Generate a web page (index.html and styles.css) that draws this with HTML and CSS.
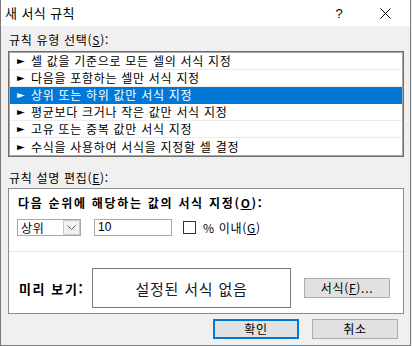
FILE: index.html
```html
<!DOCTYPE html>
<html lang="ko">
<head>
<meta charset="utf-8">
<link rel="stylesheet" href="styles.css">
</head>
<body>
<div class="window">
  <div class="titlebar">
    <div class="title">새 서식 규칙</div>
    <div class="tb-help">?</div>
    <div class="tb-close">
      <svg width="11" height="11" viewBox="0 0 11 11"><path d="M0.5 0.5 L10.5 10.5 M10.5 0.5 L0.5 10.5" stroke="#000" stroke-width="1" fill="none"/></svg>
    </div>
  </div>
  <div class="content">
    <div class="label lbl-type">규칙 유형 선택(<u>S</u>):</div>
    <div class="listbox">
      <div class="row"><span class="arrow">►</span>셀 값을 기준으로 모든 셀의 서식 지정</div>
      <div class="row"><span class="arrow">►</span>다음을 포함하는 셀만 서식 지정</div>
      <div class="row sel"><span class="arrow">►</span>상위 또는 하위 값만 서식 지정</div>
      <div class="row"><span class="arrow">►</span>평균보다 크거나 작은 값만 서식 지정</div>
      <div class="row"><span class="arrow">►</span>고유 또는 중복 값만 서식 지정</div>
      <div class="row last"><span class="arrow">►</span>수식을 사용하여 서식을 지정할 셀 결정</div>
    </div>
    <div class="label lbl-edit">규칙 설명 편집(<u>E</u>):</div>
    <div class="group">
      <div class="heading">다음 순위에 해당하는 값의 서식 지정(<u>O</u>):</div>
      <div class="controls">
        <div class="combo">
          <span class="combo-text">상위</span>
          <span class="combo-btn">
            <svg width="9" height="5" viewBox="0 0 9 5"><path d="M0.5 0.5 L4.5 4.5 L8.5 0.5" stroke="#606060" stroke-width="1" fill="none"/></svg>
          </span>
        </div>
        <div class="input">10</div>
        <div class="check"></div>
        <div class="check-label">% 이내(<u>G</u>)</div>
      </div>
      <div class="sep"></div>
      <div class="preview-row">
        <div class="preview-label">미리 보기:</div>
        <div class="preview">설정된 서식 없음</div>
        <div class="btn btn-format">서식(<u>F</u>)...</div>
      </div>
    </div>
    <div class="buttons">
      <div class="btn btn-ok">확인</div>
      <div class="btn">취소</div>
    </div>
  </div>
</div>
</body>
</html>
```

FILE: styles.css
```css
* { box-sizing: border-box; }
html, body { margin: 0; padding: 0; background: #f0f0f0; }
body {
  font-family: "Noto Sans CJK KR", "Noto Sans", sans-serif;
  font-size: 12px;
  letter-spacing: 0.7px;
  color: #000;
}
u { text-decoration: underline; text-underline-offset: 1px; }
.window {
  width: 411px;
  height: 346px;
  background: #f0f0f0;
  border-left: 1px solid #7a7a7a;
  border-right: 1px solid #7a7a7a;
  border-bottom: 1px solid #7a7a7a;
  display: flex;
  flex-direction: column;
}
.titlebar {
  height: 26px;
  background: #fff;
  display: flex;
  align-items: center;
  flex-shrink: 0;
}
.title {
  font-size: 13px;
  letter-spacing: 0.4px;
  padding-left: 4px;
  flex: 1;
  line-height: 26px;
}
.tb-help {
  width: 46px;
  text-align: center;
  font-family: "Liberation Sans", sans-serif;
  font-size: 13px;
  letter-spacing: 0;
}
.tb-close {
  width: 46px;
  height: 26px;
  display: flex;
  align-items: center;
  justify-content: center;
  margin-right: 2px;
}
.content {
  padding: 0 6px 0 7px;
  display: flex;
  flex-direction: column;
}
.label {
  height: 16px;
  line-height: 16px;
  padding-left: 1px;
}
.lbl-type { margin-top: 6px; }
.listbox {
  margin-top: 3px;
  height: 106px;
  border: 1px solid #6d6d6d;
  box-shadow: inset 0 0 0 1px #a8a8a8;
  background: #fff;
  padding: 1px;
}
.row {
  height: 17px;
  line-height: 16px;
  border-bottom: 1px solid #ececec;
  padding-left: 7px;
  white-space: nowrap;
  display: flex;
  align-items: center;
}
.row.last { border-bottom: none; }
.row.sel { background: #0078d7; color: #fff; border-bottom-color: #0078d7; }
.arrow {
  font-family: "DejaVu Sans", sans-serif;
  font-size: 10px;
  letter-spacing: 0;
  width: 14px;
  display: inline-block;
}
.lbl-edit { margin-top: 13px; }
.group {
  margin-top: 2px;
  height: 126px;
  border: 1px solid #8c8c8c;
  background: #fff;
  padding: 6px 0 0 0;
  display: flex;
  flex-direction: column;
}
.heading {
  font-weight: bold;
  height: 16px;
  line-height: 16px;
  padding-left: 9px;
  letter-spacing: 1.7px;
}
.controls {
  margin-top: 8px;
  height: 17px;
  display: flex;
  align-items: center;
  padding-left: 8px;
}
.combo {
  width: 64px;
  height: 17px;
  border: 1px solid #a8a8a8;
  display: flex;
  align-items: center;
}
.combo-text { flex: 1; padding-left: 3px; line-height: 15px; }
.combo-btn {
  width: 17px;
  height: 15px;
  border: 1px solid #c8c8c8;
  background: #f2f2f2;
  display: flex;
  align-items: center;
  justify-content: center;
}
.input {
  margin-left: 13px;
  width: 78px;
  height: 17px;
  border: 1px solid #a8a8a8;
  padding-left: 3px;
  line-height: 15px;
  font-family: "Liberation Sans", sans-serif;
  letter-spacing: 0;
}
.check {
  margin-left: 11px;
  width: 13px;
  height: 13px;
  border: 1px solid #333;
  background: #fff;
}
.check-label { margin-left: 7px; line-height: 16px; }
.sep {
  margin-top: 15px;
  height: 1px;
  background: #e3e3e3;
}
.preview-row {
  margin-top: 16px;
  display: flex;
  align-items: center;
}
.preview-label {
  width: 83px;
  padding-left: 10px;
  font-weight: bold;
  font-size: 13px;
  letter-spacing: 1.6px;
}
.preview {
  width: 199px;
  height: 40px;
  border: 1px solid #7a7a7a;
  display: flex;
  align-items: center;
  justify-content: center;
  font-size: 15px;
  letter-spacing: 0.8px;
  color: #1a1a2e;
}
.btn {
  width: 86px;
  height: 20px;
  background: #e1e1e1;
  border: 1px solid #adadad;
  display: flex;
  align-items: center;
  justify-content: center;
  line-height: 16px;
}
.btn-format { margin-left: 13px; }
.buttons {
  margin-top: 5px;
  display: flex;
  justify-content: flex-end;
  gap: 13px;
  padding-right: 6px;
}
.btn-ok { border: 2px solid #0078d7; }
```
